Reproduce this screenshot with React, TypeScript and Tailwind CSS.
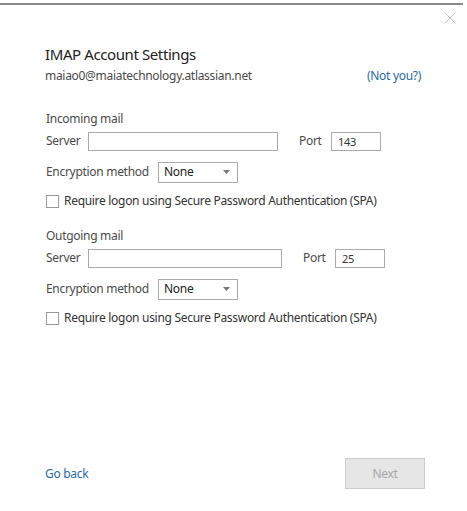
const font = { fontFamily: '"Segoe UI", "Noto Sans", "Open Sans", sans-serif' };

const MailSection = ({
  title,
  port,
  serverWidth,
}: {
  title: string;
  port: string;
  serverWidth: string;
}) => (
  <div className="flex flex-col tracking-[-0.3px]">
    <div className="text-[12px] leading-[16px] text-[#4a4a4a]">{title}</div>
    <div className="flex items-center mt-[4px] h-[20px]">
      <span className="text-[12px] text-[#4a4a4a] w-[42px]">Server</span>
      <div className={`${serverWidth} h-[19px] border border-[#ababab] bg-white`} />
      <span className="text-[12px] text-[#4a4a4a] ml-[21px] w-[32px]">Port</span>
      <div className="w-[50px] h-[19px] border border-[#ababab] bg-white text-[11px] text-[#333] pl-[6px] leading-[17px]">
        {port}
      </div>
    </div>
    <div className="flex items-center mt-[10px] h-[22px]">
      <span className="text-[12px] text-[#4a4a4a] w-[112px]">Encryption method</span>
      <div className="w-[80px] h-[21px] border border-[#ababab] bg-white flex items-center justify-between pl-[5px] pr-[7px]">
        <span className="text-[12px] text-[#222]">None</span>
        <svg width="7" height="4" viewBox="0 0 7 4">
          <path d="M0 0 L7 0 L3.5 4 Z" fill="#777" />
        </svg>
      </div>
    </div>
    <div className="flex items-center mt-[10px] h-[16px]">
      <div className="w-[13px] h-[13px] border border-[#999] bg-white" />
      <span className="text-[12px] text-[#333] ml-[5px]">
        Require logon using Secure Password Authentication (SPA)
      </span>
    </div>
  </div>
);

export default function App() {
  return (
    <div className="w-[467px] h-[511px] bg-white relative overflow-hidden" style={font}>
      <div className="h-[3px]" />
      <div className="h-[2px] w-[463px] bg-[#8a8a8a]" />
      <div className="absolute right-[11px] top-[12px]">
        <svg width="12" height="12" viewBox="0 0 12 12">
          <path d="M0.5 0.5 L11.5 11.5 M11.5 0.5 L0.5 11.5" stroke="#c4c4c4" strokeWidth="1" />
        </svg>
      </div>
      <div className="pl-[45px] pr-[46px] pt-[38px] flex flex-col">
        <div className="text-[15px] leading-[22px] text-[#222] tracking-[-0.4px]">IMAP Account Settings</div>
        <div className="flex justify-between items-center mt-[2px] tracking-[-0.3px]">
          <span className="text-[12px] text-[#4a4a4a]">maiao0@maiatechnology.atlassian.net</span>
          <span className="text-[12px] text-[#1f6aa5]">(Not you?)</span>
        </div>
        <div className="mt-[26px] pl-[1px]">
          <MailSection title="Incoming mail" port="143" serverWidth="w-[190px]" />
        </div>
        <div className="mt-[19px] pl-[1px]">
          <MailSection title="Outgoing mail" port="25" serverWidth="w-[194px]" />
        </div>
      </div>
      <div className="absolute left-[45px] right-[42px] bottom-[22px] flex items-center justify-between tracking-[-0.3px]">
        <span className="text-[12px] text-[#1f6aa5]">Go back</span>
        <div className="w-[80px] h-[31px] bg-[#e6e6e6] border border-[#cccccc] flex items-center justify-center text-[12px] text-[#a6a6a6]">
          Next
        </div>
      </div>
    </div>
  );
}
